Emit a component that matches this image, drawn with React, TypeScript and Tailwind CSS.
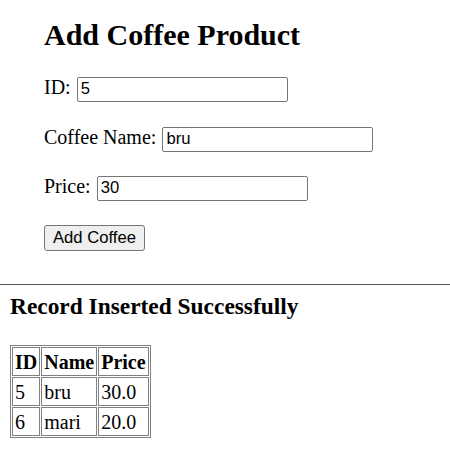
import React from "react";

const serif = { fontFamily: '"Liberation Serif", "Times New Roman", serif' };

export default function App() {
  const inputCls =
    "h-[25px] w-[211px] border border-[#767676] rounded-[2px] px-[3px] text-[16.67px] text-black bg-white outline-none";
  const arial = "font-['Liberation_Sans',Arial,sans-serif]";
  const cell = "border border-[#808080] px-[2px] h-[29px] text-left";
  return (
    <div className="w-[450px] h-[476px] bg-white text-black" style={serif}>
      <div className="pl-[44px] pt-[17px]">
        <h1 className="text-[30px] font-bold leading-[36px]">Add Coffee Product</h1>
        <div className="mt-[19px] flex items-baseline h-[25px] text-[20px]">
          <label>ID:</label>
          <input className={`${inputCls} ${arial} ml-[6px]`} defaultValue="5" />
        </div>
        <div className="mt-[25px] flex items-baseline h-[25px] text-[20px]">
          <label>Coffee Name:</label>
          <input className={`${inputCls} ${arial} ml-[6px]`} defaultValue="bru" />
        </div>
        <div className="mt-[24px] flex items-baseline h-[25px] text-[20px]">
          <label>Price:</label>
          <input className={`${inputCls} ${arial} ml-[6px]`} defaultValue="30" />
        </div>
        <div className="mt-[29px]">
          <button
            className={`h-[26px] w-[101px] bg-[#efefef] border border-[#767676] rounded-[3px] text-[16.67px] leading-[20px] text-black ${arial}`}
          >
            Add Coffee
          </button>
        </div>
      </div>
      <div className="mt-[33px] h-px bg-[#555]" />
      <div className="pl-[10px]">
        <h3 className="mt-[8px] text-[23.4px] font-bold leading-[27px]">Record Inserted Successfully</h3>
        <table className="mt-[25px] border border-[#808080] border-separate border-spacing-[1px] text-[20px] leading-[22px]">
          <thead>
            <tr>
              <th className={`${cell} font-bold`}>ID</th>
              <th className={`${cell} font-bold`}>Name</th>
              <th className={`${cell} font-bold`}>Price</th>
            </tr>
          </thead>
          <tbody>
            <tr>
              <td className={cell}>5</td>
              <td className={cell}>bru</td>
              <td className={cell}>30.0</td>
            </tr>
            <tr>
              <td className={cell}>6</td>
              <td className={cell}>mari</td>
              <td className={cell}>20.0</td>
            </tr>
          </tbody>
        </table>
      </div>
    </div>
  );
}
